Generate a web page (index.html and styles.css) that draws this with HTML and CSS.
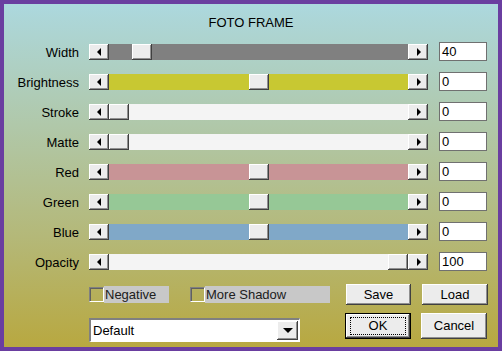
FILE: index.html
```html
<!DOCTYPE html>
<html lang="en">
<head>
    <meta charset="UTF-8">
    <title>Foto Frame</title>
    <link rel="stylesheet" href="styles.css">
</head>
<body>

    <div class="dialog">
        <div class="title">FOTO FRAME</div>

        <div class="row">
            <div class="label">Width</div>
            <div class="slider">
                <div class="btn arrow-btn"><span class="tri left"></span></div>
                <div class="track gray"><div class="btn thumb" style="margin-left: 23px"></div></div>
                <div class="btn arrow-btn"><span class="tri right"></span></div>
            </div>
            <div class="value">40</div>
        </div>

        <div class="row">
            <div class="label">Brightness</div>
            <div class="slider">
                <div class="btn arrow-btn"><span class="tri left"></span></div>
                <div class="track yellow"><div class="btn thumb" style="margin-left: 140px"></div></div>
                <div class="btn arrow-btn"><span class="tri right"></span></div>
            </div>
            <div class="value">0</div>
        </div>

        <div class="row">
            <div class="label">Stroke</div>
            <div class="slider">
                <div class="btn arrow-btn"><span class="tri left"></span></div>
                <div class="track white"><div class="btn thumb" style="margin-left: 0px"></div></div>
                <div class="btn arrow-btn"><span class="tri right"></span></div>
            </div>
            <div class="value">0</div>
        </div>

        <div class="row">
            <div class="label">Matte</div>
            <div class="slider">
                <div class="btn arrow-btn"><span class="tri left"></span></div>
                <div class="track white"><div class="btn thumb" style="margin-left: 0px"></div></div>
                <div class="btn arrow-btn"><span class="tri right"></span></div>
            </div>
            <div class="value">0</div>
        </div>

        <div class="row">
            <div class="label">Red</div>
            <div class="slider">
                <div class="btn arrow-btn"><span class="tri left"></span></div>
                <div class="track red"><div class="btn thumb" style="margin-left: 140px"></div></div>
                <div class="btn arrow-btn"><span class="tri right"></span></div>
            </div>
            <div class="value">0</div>
        </div>

        <div class="row">
            <div class="label">Green</div>
            <div class="slider">
                <div class="btn arrow-btn"><span class="tri left"></span></div>
                <div class="track green"><div class="btn thumb" style="margin-left: 140px"></div></div>
                <div class="btn arrow-btn"><span class="tri right"></span></div>
            </div>
            <div class="value">0</div>
        </div>

        <div class="row">
            <div class="label">Blue</div>
            <div class="slider">
                <div class="btn arrow-btn"><span class="tri left"></span></div>
                <div class="track blue"><div class="btn thumb" style="margin-left: 140px"></div></div>
                <div class="btn arrow-btn"><span class="tri right"></span></div>
            </div>
            <div class="value">0</div>
        </div>

        <div class="row">
            <div class="label">Opacity</div>
            <div class="slider">
                <div class="btn arrow-btn"><span class="tri left"></span></div>
                <div class="track white"><div class="btn thumb" style="margin-left: 279px"></div></div>
                <div class="btn arrow-btn"><span class="tri right"></span></div>
            </div>
            <div class="value">100</div>
        </div>

        <div class="options">
            <div class="check negative">
                <span class="box"></span>
                <span class="check-label">Negative</span>
            </div>
            <div class="check shadow">
                <span class="box"></span>
                <span class="check-label">More Shadow</span>
            </div>
            <div class="btn push save">Save</div>
            <div class="btn push load">Load</div>
        </div>

        <div class="actions">
            <div class="dropdown">
                <span class="dropdown-text">Default</span>
                <div class="btn drop-btn"><span class="tri down"></span></div>
            </div>
            <div class="btn push ok"><span class="focus">OK</span></div>
            <div class="btn push cancel">Cancel</div>
        </div>
    </div>

</body>
</html>
```

FILE: styles.css
```css
html, body {
    margin: 0;
    padding: 0;
}

body {
    font-family: "Liberation Sans", Arial, sans-serif;
    font-size: 13px;
    color: #000;
}

.dialog {
    box-sizing: border-box;
    width: 502px;
    height: 351px;
    border: 4px solid #6a3ea0;
    background: linear-gradient(#acd8de 0%, #b0c8aa 35%, #b4b878 68%, #b8a840 100%);
}

.title {
    height: 33px;
    box-sizing: border-box;
    padding-top: 11px;
    line-height: 15px;
    text-align: center;
}

.row {
    display: flex;
    align-items: center;
    height: 30px;
}

.label {
    box-sizing: border-box;
    width: 85px;
    padding-right: 10px;
    text-align: right;
    line-height: 15px;
}

.slider {
    display: flex;
    width: 339px;
    height: 16px;
}

.btn {
    box-sizing: border-box;
    background: #ececec;
    box-shadow: inset -1px -1px #404040, inset 1px 1px #ffffff, inset -2px -2px #909090;
}

.arrow-btn {
    width: 20px;
    height: 16px;
    display: flex;
    align-items: center;
    justify-content: center;
}

.track {
    flex: 1;
    display: flex;
}

.thumb {
    width: 20px;
    height: 16px;
}

.track.gray { background: #808080; }
.track.yellow { background: #c8c832; }
.track.white { background: #f4f4f4; }
.track.red { background: #c89496; }
.track.green { background: #96c896; }
.track.blue { background: #80a8c8; }

.tri {
    width: 0;
    height: 0;
    border: 4px solid transparent;
}

.tri.left {
    border-left-width: 0;
    border-right-color: #000;
    margin-left: -1px;
}

.tri.right {
    border-right-width: 0;
    border-left-color: #000;
    margin-left: 1px;
}

.tri.down {
    border-bottom-width: 0;
    border-top-color: #000;
    border-width: 5px 5px 0 5px;
}

.value {
    box-sizing: border-box;
    margin-left: 11px;
    width: 48px;
    height: 19px;
    margin-top: -1px;
    background: #fff;
    border: 1px solid #707070;
    padding-left: 2px;
    line-height: 17px;
}

.options {
    display: flex;
    align-items: center;
    height: 21px;
    margin-top: 7px;
    padding-left: 85px;
}

.check {
    display: flex;
    align-items: center;
    height: 17px;
}

.box {
    box-sizing: border-box;
    width: 15px;
    height: 15px;
    border-top: 1px solid #808080;
    border-left: 1px solid #808080;
    border-right: 1px solid #fff;
    border-bottom: 1px solid #fff;
    box-shadow: inset 1px 1px #606060;
}

.check-label {
    height: 17px;
    line-height: 17px;
    background: #c8c8c8;
    color: #202020;
    padding-left: 1px;
}

.negative .check-label {
    width: 64px;
}

.shadow {
    margin-left: 21px;
}

.shadow .check-label {
    width: 124px;
}

.push {
    height: 21px;
    line-height: 21px;
    text-align: center;
}

.save {
    width: 65px;
    margin-left: 16px;
}

.load {
    width: 66px;
    margin-left: 11px;
}

.actions {
    display: flex;
    align-items: flex-start;
    margin-top: 8px;
    padding-left: 85px;
}

.dropdown {
    box-sizing: border-box;
    display: flex;
    align-items: center;
    width: 211px;
    height: 24px;
    margin-top: 5px;
    background: #fff;
    border-top: 2px solid #808080;
    border-left: 2px solid #808080;
    border-right: 1px solid #fff;
    border-bottom: 1px solid #fff;
}

.dropdown-text {
    flex: 1;
    padding-left: 2px;
    line-height: 19px;
}

.drop-btn {
    width: 21px;
    height: 19px;
    margin-right: 1px;
    display: flex;
    align-items: center;
    justify-content: center;
}

.ok {
    width: 66px;
    height: 26px;
    margin-left: 45px;
    padding: 4px 5px;
    box-shadow: inset -1px -1px #000, inset 1px 1px #000, inset -2px -2px #404040, inset 2px 2px #fff, inset -3px -3px #909090;
}

.focus {
    display: block;
    height: 16px;
    line-height: 16px;
    border: 1px dotted #000;
}

.cancel {
    width: 66px;
    height: 26px;
    line-height: 26px;
    margin-left: 10px;
}
```
